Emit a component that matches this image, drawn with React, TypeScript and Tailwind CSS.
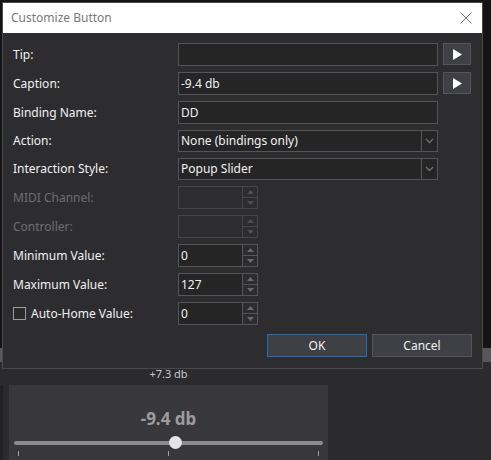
const font = { fontFamily: '"Noto Sans", "Open Sans", sans-serif' }

function PlayButton() {
  return (
    <button className="w-[28px] h-[22px] flex items-center justify-center bg-[#3f3f46] border border-[#555558]">
      <svg width="10" height="11" viewBox="0 0 10 11">
        <polygon points="1,0 10,5.5 1,11" fill="#ffffff" />
      </svg>
    </button>
  )
}

function TextBox({ value }: { value: string }) {
  return (
    <div className="w-[260px] h-[23px] flex items-center pl-[2px] bg-[#252526] border border-[#555558] text-[#f1f1f1]">
      {value}
    </div>
  )
}

function Combo({ value }: { value: string }) {
  return (
    <div className="w-[260px] h-[22px] flex bg-[#252526] border border-[#555558] text-[#f1f1f1]">
      <div className="flex-1 flex items-center pl-[2px]">{value}</div>
      <div className="w-[16px] flex items-center justify-center border-l border-[#555558]">
        <svg width="9" height="6" viewBox="0 0 9 6">
          <polyline points="1,1 4.5,4.5 8,1" fill="none" stroke="#707070" strokeWidth="1.3" />
        </svg>
      </div>
    </div>
  )
}

function Spinner({ value, disabled }: { value?: string; disabled?: boolean }) {
  const border = disabled ? 'border-[#45454a]' : 'border-[#555558]'
  const arrow = disabled ? '#505054' : '#6a6a6e'
  return (
    <div className="flex h-[23px]">
      <div
        className={`w-[65px] flex items-center pl-[2px] border ${border} ${
          disabled ? 'bg-[#2d2d30]' : 'bg-[#252526]'
        } text-[#f1f1f1]`}
      >
        {value}
      </div>
      <div className={`w-[15px] flex flex-col border border-l-0 ${border}`}>
        <div className={`flex-1 flex items-center justify-center border-b ${border}`}>
          <svg width="7" height="4" viewBox="0 0 7 4">
            <polygon points="0,4 3.5,0 7,4" fill={arrow} />
          </svg>
        </div>
        <div className="flex-1 flex items-center justify-center">
          <svg width="7" height="4" viewBox="0 0 7 4">
            <polygon points="0,0 3.5,4 7,0" fill={arrow} />
          </svg>
        </div>
      </div>
    </div>
  )
}

function Row({ label, disabled, children, checkbox }: { label: string; disabled?: boolean; children: React.ReactNode; checkbox?: boolean }) {
  return (
    <div className="flex items-center">
      <div className={`w-[165px] flex items-center gap-[5px] ${disabled ? 'text-[#6d6d70]' : 'text-[#f1f1f1]'}`}>
        {checkbox && <div className="w-[13px] h-[13px] border border-[#9a9a9a] bg-[#2a2a2c]" />}
        {label}
      </div>
      {children}
    </div>
  )
}

export default function App() {
  return (
    <div className="relative w-[491px] h-[460px] overflow-hidden bg-[#141414] text-[12px]" style={font}>
      {/* app behind the dialog */}
      <div className="h-[348px]" />
      <div className="h-[14px] bg-[#58585a]" />
      <div className="h-[98px] bg-[#2b2b2d] flex flex-col">
        <div className="h-[23px] flex items-end pl-[9px]">
          <div className="w-[319px] text-center text-[11px] text-[#c8c8c8] leading-none pb-[6px]">+7.3 db</div>
        </div>
        <div className="flex flex-1">
          <div className="w-[3px] bg-[#222224]" />
          <div className="w-[6px]" />
          <div className="w-[319px] bg-[#38383b] flex flex-col items-center pt-[25px]">
            <div className="text-[17px] font-bold text-[#9c9c9e] leading-none">-9.4 db</div>
            <div className="relative w-[309px] h-[14px] mt-[9px]">
              <div className="absolute left-0 right-0 top-[5px] h-[4px] rounded-full bg-[#8c8c8e]" />
              <div className="absolute left-[155px] top-0 w-[13px] h-[13px] rounded-full bg-[#e4e4e4]" />
            </div>
            <div className="w-[301px] flex justify-between mt-[1px]">
              <div className="w-px h-[5px] bg-[#a0a0a0]" />
              <div className="w-px h-[5px] bg-[#a0a0a0]" />
              <div className="w-px h-[5px] bg-[#a0a0a0]" />
            </div>
          </div>
        </div>
      </div>

      {/* modal dialog */}
      <div className="absolute left-[2px] top-[2px] w-[481px] h-[367px] bg-[#2d2d30] border border-[#4a4a4e] flex flex-col">
        <div className="h-[30px] bg-white flex items-center justify-between pl-[8px] pr-[10px]">
          <span className="text-[#7a7a7a]">Customize Button</span>
          <svg width="12" height="12" viewBox="0 0 12 12">
            <path d="M0.5 0.5 L11.5 11.5 M11.5 0.5 L0.5 11.5" stroke="#707070" strokeWidth="1" />
          </svg>
        </div>
        <div className="flex flex-col pt-[10px] pl-[10px] pr-[10px] gap-[6px]">
          <Row label="Tip:">
            <div className="flex gap-[5px]">
              <TextBox value="" />
              <PlayButton />
            </div>
          </Row>
          <Row label="Caption:">
            <div className="flex gap-[5px]">
              <TextBox value="-9.4 db" />
              <PlayButton />
            </div>
          </Row>
          <Row label="Binding Name:">
            <TextBox value="DD" />
          </Row>
          <Row label="Action:">
            <Combo value="None (bindings only)" />
          </Row>
          <Row label="Interaction Style:">
            <Combo value="Popup Slider" />
          </Row>
          <Row label="MIDI Channel:" disabled>
            <Spinner disabled />
          </Row>
          <Row label="Controller:" disabled>
            <Spinner disabled />
          </Row>
          <Row label="Minimum Value:">
            <Spinner value="0" />
          </Row>
          <Row label="Maximum Value:">
            <Spinner value="127" />
          </Row>
          <Row label="Auto-Home Value:" checkbox>
            <Spinner value="0" />
          </Row>
          <div className="flex justify-end gap-[5px] mt-[3px]">
            <button className="w-[100px] h-[23px] bg-[#3f3f46] border border-[#1f6fc0] text-[#f1f1f1]">OK</button>
            <button className="w-[100px] h-[23px] bg-[#3f3f46] border border-[#555558] text-[#f1f1f1]">Cancel</button>
          </div>
        </div>
      </div>
    </div>
  )
}
